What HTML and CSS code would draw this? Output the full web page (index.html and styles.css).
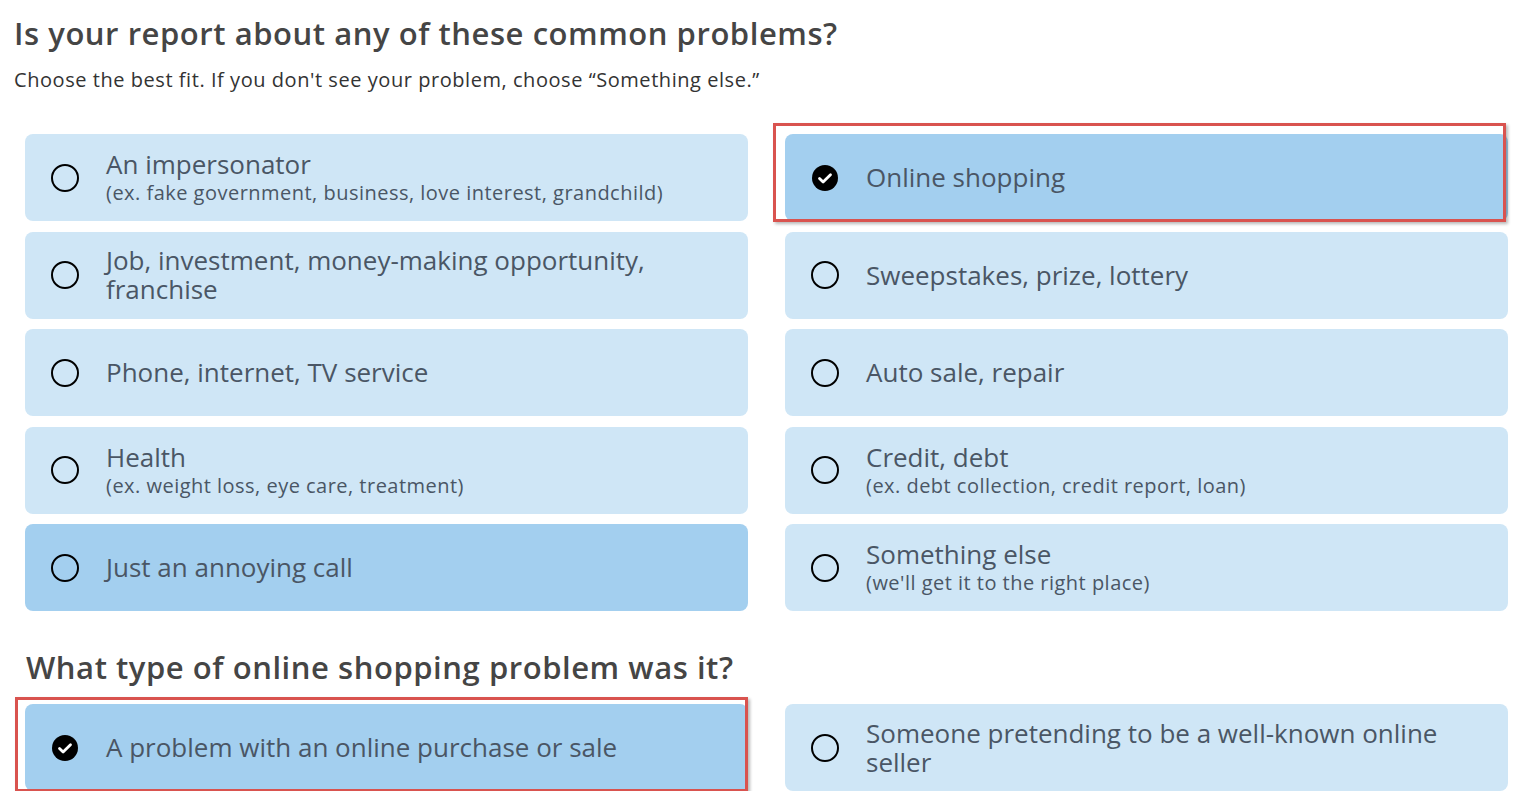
FILE: index.html
```html
<!DOCTYPE html>
<html>
<head>
<meta charset="utf-8">
<link rel="stylesheet" href="styles.css">
</head>
<body>
<div class="page">
  <h1 class="title">Is your report about any of these common problems?</h1>
  <p class="subtitle">Choose the best fit. If you don't see your problem, choose “Something else.”</p>

  <div class="grid">
    <div class="card"><span class="radio"></span><div class="text"><div class="label">An impersonator</div><div class="sub">(ex. fake government, business, love interest, grandchild)</div></div></div>
    <div class="card selected"><span class="check"><svg viewBox="0 0 26 26" width="26" height="26"><circle cx="13" cy="13" r="13" fill="#000"/><path d="M7.5 13.5l3.6 3.6 7.4-7.4" fill="none" stroke="#fff" stroke-width="2.8" stroke-linecap="round" stroke-linejoin="round"/></svg></span><div class="text"><div class="label">Online shopping</div></div><span class="mark mark-top"></span></div>
    <div class="card"><span class="radio"></span><div class="text"><div class="label">Job, investment, money-making opportunity, franchise</div></div></div>
    <div class="card"><span class="radio"></span><div class="text"><div class="label">Sweepstakes, prize, lottery</div></div></div>
    <div class="card"><span class="radio"></span><div class="text"><div class="label">Phone, internet, TV service</div></div></div>
    <div class="card"><span class="radio"></span><div class="text"><div class="label">Auto sale, repair</div></div></div>
    <div class="card"><span class="radio"></span><div class="text"><div class="label">Health</div><div class="sub">(ex. weight loss, eye care, treatment)</div></div></div>
    <div class="card"><span class="radio"></span><div class="text"><div class="label">Credit, debt</div><div class="sub">(ex. debt collection, credit report, loan)</div></div></div>
    <div class="card hover"><span class="radio"></span><div class="text"><div class="label">Just an annoying call</div></div></div>
    <div class="card"><span class="radio"></span><div class="text"><div class="label">Something else</div><div class="sub">(we'll get it to the right place)</div></div></div>
  </div>

  <h2 class="title2">What type of online shopping problem was it?</h2>

  <div class="grid">
    <div class="card selected"><span class="check"><svg viewBox="0 0 26 26" width="26" height="26"><circle cx="13" cy="13" r="13" fill="#000"/><path d="M7.5 13.5l3.6 3.6 7.4-7.4" fill="none" stroke="#fff" stroke-width="2.8" stroke-linecap="round" stroke-linejoin="round"/></svg></span><div class="text"><div class="label">A problem with an online purchase or sale</div></div><span class="mark mark-bottom"></span></div>
    <div class="card"><span class="radio"></span><div class="text"><div class="label">Someone pretending to be a well-known online seller</div></div></div>
  </div>
</div>
</body>
</html>
```

FILE: styles.css
```css
html, body {
  margin: 0;
  padding: 0;
  background: #fff;
}
.page {
  padding: 12px 12px 0 14px;
  font-family: "Open Sans", "Lato", sans-serif;
  color: #4b5563;
}
.title {
  margin: 0;
  font-size: 31px;
  font-weight: 600;
  color: #454545;
  line-height: 42px;
  letter-spacing: 0.55px;
}
.subtitle {
  margin: 14px 0 0 0;
  font-size: 20px;
  line-height: 24px;
  color: #333;
  letter-spacing: 0.55px;
}
.grid {
  display: grid;
  grid-template-columns: 723px 723px;
  column-gap: 37px;
  row-gap: 10.5px;
  margin: 42px 0 0 11px;
}
.card {
  position: relative;
  height: 87px;
  box-sizing: border-box;
  background: #cfe6f6;
  border-radius: 8px;
  display: flex;
  align-items: center;
  padding-left: 26px;
}
.card.hover, .card.selected {
  background: #a3cfef;
}
.radio {
  flex: none;
  width: 28px;
  height: 28px;
  box-sizing: border-box;
  border: 2.6px solid #000;
  border-radius: 50%;
  margin-right: 27px;
}
.check {
  flex: none;
  width: 28px;
  height: 28px;
  display: flex;
  align-items: center;
  justify-content: center;
  margin-right: 27px;
}
.check svg { display: block; }
.text {
  max-width: 600px;
}
.label {
  font-size: 26px;
  line-height: 29px;
  color: #4a5665;
}
.sub {
  margin-top: 2px;
  font-size: 20px;
  line-height: 24px;
  color: #4a5665;
  letter-spacing: 0.48px;
}
.title2 {
  margin: 35px 0 0 12px;
  font-size: 31px;
  font-weight: 600;
  color: #454545;
  line-height: 42px;
  letter-spacing: 0.55px;
}
.grid + .title2 + .grid {
  margin-top: 16px;
}
.mark {
  position: absolute;
  border: 3px solid #d9534f;
  box-shadow: 2px 2px 3px rgba(0,0,0,0.28);
  pointer-events: none;
}
.mark-top {
  left: -12px;
  top: -11px;
  right: 2px;
  bottom: -1px;
}
.mark-bottom {
  left: -10px;
  top: -7px;
  right: 0;
  bottom: -1px;
}
```
